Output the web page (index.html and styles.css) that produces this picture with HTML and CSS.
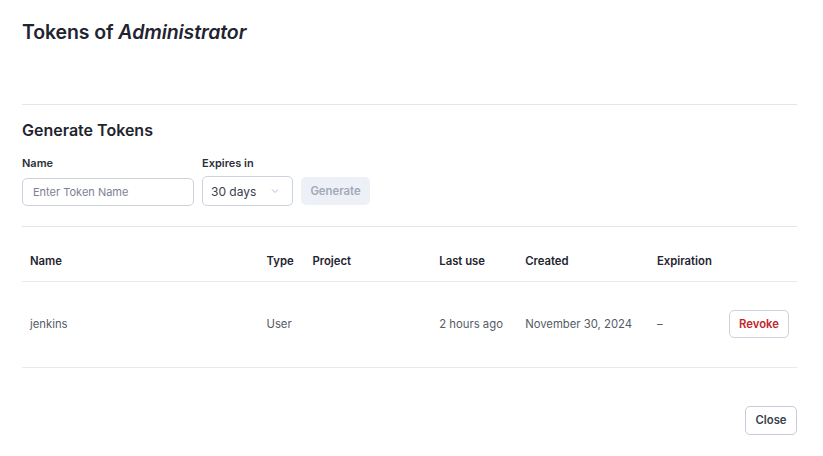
FILE: index.html
```html
<!DOCTYPE html>
<html>
<head>
<meta charset="utf-8">
<link rel="stylesheet" href="styles.css">
</head>
<body>
<div class="dialog">
  <h1 class="title">Tokens of <em>Administrator</em></h1>
  <div class="section">
    <h2 class="subtitle">Generate Tokens</h2>
    <div class="form">
      <div class="field">
        <label class="label">Name</label>
        <div class="input">Enter Token Name</div>
      </div>
      <div class="field">
        <label class="label">Expires in</label>
        <div class="select">
          <span>30 days</span>
          <svg width="10" height="10" viewBox="0 0 10 10"><path d="M2 3.5 L5 6.5 L8 3.5" fill="none" stroke="#b4bac6" stroke-width="1"/></svg>
        </div>
      </div>
      <button class="btn-generate">Generate</button>
    </div>
  </div>
  <table class="tokens">
    <thead>
      <tr>
        <th class="c-name">Name</th>
        <th class="c-type">Type</th>
        <th class="c-project">Project</th>
        <th class="c-last">Last use</th>
        <th class="c-created">Created</th>
        <th class="c-exp">Expiration</th>
        <th class="c-act"></th>
      </tr>
    </thead>
    <tbody>
      <tr>
        <td>jenkins</td>
        <td>User</td>
        <td></td>
        <td>2 hours ago</td>
        <td>November 30, 2024</td>
        <td>–</td>
        <td class="act"><button class="btn-revoke">Revoke</button></td>
      </tr>
    </tbody>
  </table>
  <div class="footer">
    <button class="btn-close">Close</button>
  </div>
</div>
</body>
</html>
```

FILE: styles.css
```css
* { box-sizing: border-box; }
body {
  margin: 0;
  background: #fff;
  font-family: Inter, "Noto Sans", sans-serif;
  color: #1f2430;
}
.dialog {
  padding: 18px 26px 0 22px;
}
.title {
  margin: 0;
  font-size: 19.5px;
  font-weight: 600;
  line-height: 28px;
  height: 87px;
  border-bottom: 1px solid #e3e5ea;
  letter-spacing: -0.1px;
}
.title em { font-style: italic; font-weight: 600; }
.section {
  padding-top: 14px;
  padding-bottom: 20px;
  border-bottom: 1px solid #e3e5ea;
}
.subtitle {
  margin: 0;
  font-size: 16px;
  font-weight: 600;
  line-height: 22px;
}
.form {
  display: flex;
  align-items: flex-end;
  gap: 8px;
  margin-top: 15px;
}
.field { display: flex; flex-direction: column; }
.label {
  font-size: 11px;
  font-weight: 600;
  line-height: 14px;
  color: #2a2f3b;
  margin-bottom: 6px;
}
.field:first-child .label { margin-bottom: 8px; }
.input {
  width: 172px;
  height: 28px;
  border: 1px solid #cdd2dd;
  border-radius: 5px;
  font-size: 11px;
  color: #7b8292;
  padding: 0 10px;
  display: flex;
  align-items: center;
}
.select {
  width: 91px;
  height: 30px;
  border: 1px solid #cdd2dd;
  border-radius: 5px;
  font-size: 12px;
  color: #3b404c;
  padding: 0 8px;
  display: flex;
  align-items: center;
  gap: 14px;
}
.btn-generate {
  height: 28px;
  width: 69px;
  margin-bottom: 1px;
  border: none;
  border-radius: 5px;
  background: #eef0f7;
  color: #a2a9b8;
  font-family: inherit;
  font-size: 11.3px;
  font-weight: 600;
}
.tokens {
  width: 100%;
  border-collapse: collapse;
  font-size: 11.3px;
}
.tokens th {
  text-align: left;
  font-weight: 600;
  color: #1f2430;
  height: 54px;
  padding: 15px 8px 0;
  border-bottom: 1px solid #e8eaee;
}
.tokens td {
  color: #555b67;
  height: 86px;
  padding: 0 8px;
  border-bottom: 1px solid #e8eaee;
}
.c-name { width: 237px; }
.c-type { width: 46px; }
.c-project { width: 127px; }
.c-last { width: 86px; }
.c-created { width: 132px; }
.c-exp { width: 72px; }
.tokens td.act { text-align: right; padding-right: 8px; }
.btn-revoke {
  height: 28px;
  width: 60px;
  border: 1px solid #cdd2dd;
  border-radius: 5px;
  background: #fff;
  color: #c0262d;
  font-family: inherit;
  font-size: 11.3px;
  font-weight: 600;
}
.footer {
  display: flex;
  justify-content: flex-end;
  padding-top: 38px;
}
.btn-close {
  height: 29px;
  width: 52px;
  border: 1px solid #c4cad8;
  border-radius: 5px;
  background: #fff;
  color: #3b404c;
  font-family: inherit;
  font-size: 11.3px;
  font-weight: 600;
}
```
